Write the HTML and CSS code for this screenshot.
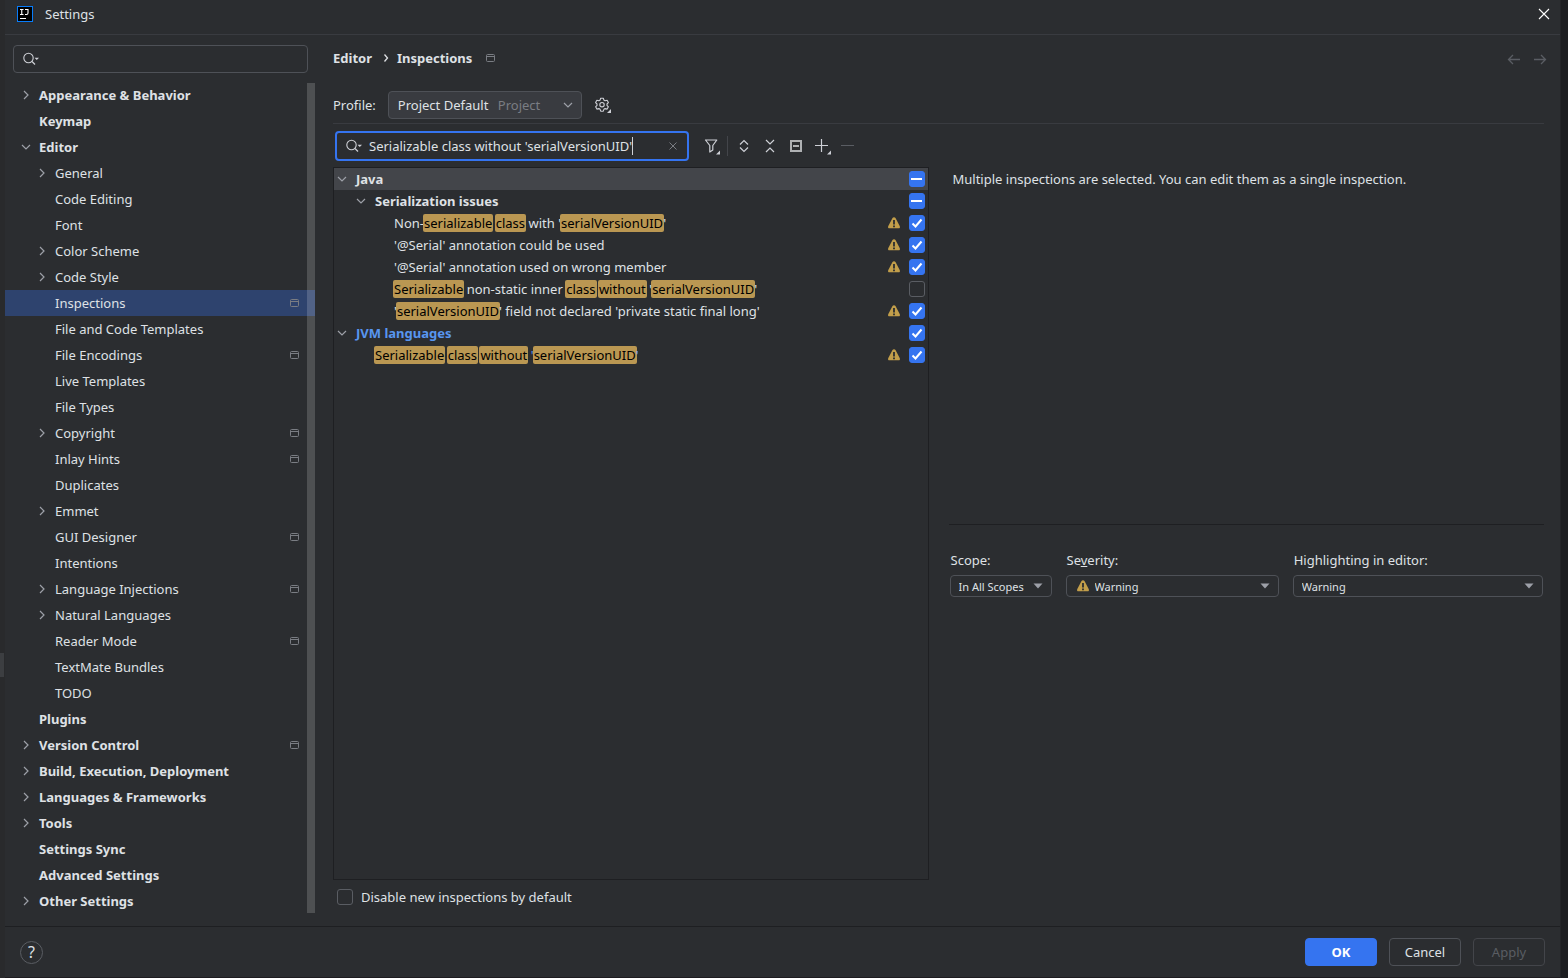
FILE: index.html
```html
<!DOCTYPE html>
<html lang="en">
<head>
  <meta charset="UTF-8">
  <meta name="viewport" content="width=device-width, initial-scale=1.0">
  <title>Settings</title>
  <link rel="stylesheet" href="styles.css">
</head>
<body>
  <!-- Icon sprite -->
  <svg class="sprite" aria-hidden="true">
    <symbol id="i-right" viewBox="0 0 16 16"><path d="M6 4l4 4-4 4" fill="none" stroke="currentColor" stroke-width="1.2"/></symbol>
    <symbol id="i-down" viewBox="0 0 16 16"><path d="M4 6l4 4 4-4" fill="none" stroke="currentColor" stroke-width="1.2"/></symbol>
    <symbol id="i-project" viewBox="0 0 16 16"><path d="M4.500 5.500a1 1 0 0 1 1-1h6a1 1 0 0 1 1 1v5a1 1 0 0 1-1 1h-6a1 1 0 0 1-1-1zM4.500 6.500h8" fill="none" stroke="currentColor"/></symbol>
    <symbol id="i-search" viewBox="0 0 20 16"><circle cx="6.500" cy="7" r="4.700" fill="none" stroke="currentColor" stroke-width="1.1"/><path d="M10 10.500l3 3" stroke="currentColor" stroke-width="1.2"/><path d="M12.500 6.800h4.500l-2.250 2.300z" fill="currentColor"/></symbol>
    <symbol id="i-warning" viewBox="0 0 16 16"><path d="M8 2.200q1 0 1.500.9l4.200 7.900q.9 2.300-1.200 2.300h-9q-2.100 0-1.200-2.300l4.200-7.900q.5-.9 1.500-.9z" fill="#c29e4a"/><path d="M7.100 5h1.800v4.500H7.100zM7.100 10.500h1.800v1.700H7.100z" fill="#2b2d30"/></symbol>
    <symbol id="i-triangle" viewBox="0 0 16 16"><path d="M3.500 5.500h9l-4.500 5z" fill="currentColor"/></symbol>
  </svg>

  <div class="edge edge-left"><span class="edge-grip"></span></div>

  <div class="window">
    <header class="titlebar">
      <svg class="logo" viewBox="0 0 16 16" aria-hidden="true">
        <rect width="16" height="16" fill="#087cfa"/>
        <rect x="1" y="1" width="14" height="14" fill="#000"/>
        <path d="M3 3.500h3.500M4.750 3.500v5M3 8.500h3.500M8 3.500h3v3.500q0 1.500-1.500 1.500H8M3 12.500h6" fill="none" stroke="#fff" stroke-width="1.100"/>
      </svg>
      <h1>Settings</h1>
      <button class="icon-btn close" aria-label="Close">
        <svg width="12" height="12" viewBox="0 0 12 12"><path d="M1 1l10 10M11 1L1 11" stroke="#fff" stroke-width="1.100"/></svg>
      </button>
    </header>

    <div class="body">
      <aside class="sidebar">
        <label class="search-box">
          <svg class="i-search"><use href="#i-search"/></svg>
          <input type="text" aria-label="Search settings">
        </label>

        <nav class="nav">
          <ul>
            <li class="top"><svg><use href="#i-right"/></svg><a href="#">Appearance &amp; Behavior</a></li>
            <li class="top leaf"><a href="#">Keymap</a></li>
            <li class="top"><svg><use href="#i-down"/></svg><a href="#">Editor</a></li>
            <li class="sub"><svg><use href="#i-right"/></svg><a href="#">General</a></li>
            <li class="sub leaf"><a href="#">Code Editing</a></li>
            <li class="sub leaf"><a href="#">Font</a></li>
            <li class="sub"><svg><use href="#i-right"/></svg><a href="#">Color Scheme</a></li>
            <li class="sub"><svg><use href="#i-right"/></svg><a href="#">Code Style</a></li>
            <li class="sub leaf active"><a href="#">Inspections</a><svg class="scope"><use href="#i-project"/></svg></li>
            <li class="sub leaf"><a href="#">File and Code Templates</a></li>
            <li class="sub leaf"><a href="#">File Encodings</a><svg class="scope"><use href="#i-project"/></svg></li>
            <li class="sub leaf"><a href="#">Live Templates</a></li>
            <li class="sub leaf"><a href="#">File Types</a></li>
            <li class="sub"><svg><use href="#i-right"/></svg><a href="#">Copyright</a><svg class="scope"><use href="#i-project"/></svg></li>
            <li class="sub leaf"><a href="#">Inlay Hints</a><svg class="scope"><use href="#i-project"/></svg></li>
            <li class="sub leaf"><a href="#">Duplicates</a></li>
            <li class="sub"><svg><use href="#i-right"/></svg><a href="#">Emmet</a></li>
            <li class="sub leaf"><a href="#">GUI Designer</a><svg class="scope"><use href="#i-project"/></svg></li>
            <li class="sub leaf"><a href="#">Intentions</a></li>
            <li class="sub"><svg><use href="#i-right"/></svg><a href="#">Language Injections</a><svg class="scope"><use href="#i-project"/></svg></li>
            <li class="sub"><svg><use href="#i-right"/></svg><a href="#">Natural Languages</a></li>
            <li class="sub leaf"><a href="#">Reader Mode</a><svg class="scope"><use href="#i-project"/></svg></li>
            <li class="sub leaf"><a href="#">TextMate Bundles</a></li>
            <li class="sub leaf"><a href="#">TODO</a></li>
            <li class="top leaf"><a href="#">Plugins</a></li>
            <li class="top"><svg><use href="#i-right"/></svg><a href="#">Version Control</a><svg class="scope"><use href="#i-project"/></svg></li>
            <li class="top"><svg><use href="#i-right"/></svg><a href="#">Build, Execution, Deployment</a></li>
            <li class="top"><svg><use href="#i-right"/></svg><a href="#">Languages &amp; Frameworks</a></li>
            <li class="top"><svg><use href="#i-right"/></svg><a href="#">Tools</a></li>
            <li class="top leaf"><a href="#">Settings Sync</a></li>
            <li class="top leaf"><a href="#">Advanced Settings</a></li>
            <li class="top"><svg><use href="#i-right"/></svg><a href="#">Other Settings</a></li>
          </ul>
          <span class="scrollbar"></span>
        </nav>
      </aside>

      <main class="content">
        <div class="crumbs">
          <a href="#">Editor</a>
          <svg class="crumb-sep" viewBox="0 0 6 10"><path d="M1.500 1.500L4.500 5l-3 3.500" fill="none" stroke="currentColor" stroke-width="1.300"/></svg>
          <h2>Inspections</h2>
          <svg class="scope"><use href="#i-project"/></svg>
          <div class="history">
            <button class="icon-btn" aria-label="Back" disabled><svg width="14" height="16" viewBox="0 0 14 16"><path d="M13 9.500H2M6 5L1.500 9.500 6 14" fill="none" stroke="currentColor" stroke-width="1.300"/></svg></button>
            <button class="icon-btn" aria-label="Forward" disabled><svg width="14" height="16" viewBox="0 0 14 16"><path d="M1 9.500h11M8 5l4.500 4.500L8 14" fill="none" stroke="currentColor" stroke-width="1.300"/></svg></button>
          </div>
        </div>

        <div class="profile">
          <label for="profile">Profile:</label>
          <div class="select select-profile">
            <select id="profile"><option>Project Default</option></select>
            <span class="hint">Project</span>
            <svg class="arrow"><use href="#i-down"/></svg>
          </div>
          <button class="icon-btn" aria-label="Profile actions">
            <svg width="20" height="20" viewBox="0 0 20 20">
              <path d="M7.700 3.200h2.600l.6 1.900 1.200.7 2-.5 1.300 2.300-1.400 1.400v1.400l1.400 1.400-1.300 2.300-2-.5-1.200.7-.6 1.900H7.700l-.6-1.900-1.200-.7-2 .5-1.300-2.300L4 10.400V9L2.600 7.600l1.300-2.300 2 .5 1.200-.7z" fill="none" stroke="currentColor" stroke-width="1.100" stroke-linejoin="round"/>
              <circle cx="9" cy="9.700" r="2.200" fill="none" stroke="currentColor" stroke-width="1.100"/>
              <path d="M18 14v4h-4z" fill="currentColor"/>
            </svg>
          </button>
        </div>

        <div class="panes">
          <section class="tree-pane">
            <div class="toolbar">
              <label class="search-box focused">
                <svg class="i-search"><use href="#i-search"/></svg>
                <input type="text" value="Serializable class without 'serialVersionUID'" aria-label="Search inspections">
                <span class="caret"></span>
                <button class="icon-btn clear" aria-label="Clear"><svg width="10" height="10" viewBox="0 0 10 10"><path d="M1.500 1.500l7 7M8.500 1.500l-7 7" stroke="currentColor"/></svg></button>
              </label>
              <button class="icon-btn tool filter" aria-label="Filter"><svg viewBox="0 0 20 20"><path d="M3.500 4h11.300l-4 5.500v4.500l-3 2V9.500z" fill="none" stroke="currentColor" stroke-width="1.200" stroke-linejoin="round"/><path d="M18 14.500v4h-4z" fill="currentColor"/></svg></button>
              <span class="tool-sep"></span>
              <button class="icon-btn tool" aria-label="Expand all"><svg viewBox="0 0 20 20"><path d="M6 8.500l4-4 4 4M6 11.500l4 4 4-4" fill="none" stroke="currentColor" stroke-width="1.200"/></svg></button>
              <button class="icon-btn tool" aria-label="Collapse all"><svg viewBox="0 0 20 20"><path d="M6 4l4 4 4-4M6 16l4-4 4 4" fill="none" stroke="currentColor" stroke-width="1.200"/></svg></button>
              <button class="icon-btn tool" aria-label="Reset to empty"><svg viewBox="0 0 20 20"><path d="M5 5h10v10H5z" fill="none" stroke="#afb1b3" stroke-width="2"/><path d="M7 10h6" stroke="#afb1b3" stroke-width="2"/></svg></button>
              <button class="icon-btn tool" aria-label="Add"><svg viewBox="0 0 20 20"><path d="M3 9.500h13M9.500 3v13" stroke="currentColor" stroke-width="1.200"/><path d="M19 14.500v4h-4z" fill="currentColor"/></svg></button>
              <button class="icon-btn tool" aria-label="Remove" disabled><svg viewBox="0 0 20 20"><path d="M3 9.500h13" stroke="currentColor"/></svg></button>
            </div>

            <ul class="tree">
              <li class="level-1 group selected"><svg><use href="#i-down"/></svg><label for="c1">Java</label><input type="checkbox" id="c1" class="partial"></li>
              <li class="level-2 group"><svg><use href="#i-down"/></svg><label for="c2">Serialization issues</label><input type="checkbox" id="c2" class="partial"></li>
              <li class="level-3"><label for="c3">Non-<mark>serializable</mark> <mark>class</mark> with '<mark>serialVersionUID</mark>'</label><svg><use href="#i-warning"/></svg><input type="checkbox" id="c3" checked></li>
              <li class="level-3"><label for="c4">'@Serial' annotation could be used</label><svg><use href="#i-warning"/></svg><input type="checkbox" id="c4" checked></li>
              <li class="level-3"><label for="c5">'@Serial' annotation used on wrong member</label><svg><use href="#i-warning"/></svg><input type="checkbox" id="c5" checked></li>
              <li class="level-3"><label for="c6"><mark>Serializable</mark> non-static inner <mark>class</mark> <mark>without</mark> '<mark>serialVersionUID</mark>'</label><input type="checkbox" id="c6"></li>
              <li class="level-3"><label for="c7">'<mark>serialVersionUID</mark>' field not declared 'private static final long'</label><svg><use href="#i-warning"/></svg><input type="checkbox" id="c7" checked></li>
              <li class="level-1 group changed"><svg><use href="#i-down"/></svg><label for="c8">JVM languages</label><input type="checkbox" id="c8" checked></li>
              <li class="level-2 changed"><label for="c9"><mark>Serializable</mark> <mark>class</mark> <mark>without</mark> '<mark>serialVersionUID</mark>'</label><svg><use href="#i-warning"/></svg><input type="checkbox" id="c9" checked></li>
            </ul>

            <div class="new-default">
              <input type="checkbox" id="disable-new">
              <label for="disable-new">Disable new inspections by default</label>
            </div>
          </section>

          <section class="details">
            <p class="description">Multiple inspections are selected. You can edit them as a single inspection.</p>
            <div class="options">
              <div class="field field-scope">
                <label for="scope">Scope:</label>
                <div class="select">
                  <select id="scope"><option>In All Scopes</option></select>
                  <svg class="arrow"><use href="#i-triangle"/></svg>
                </div>
              </div>
              <div class="field field-severity">
                <label for="severity">Se<u>v</u>erity:</label>
                <div class="select with-icon">
                  <select id="severity"><option>Warning</option></select>
                  <svg class="lead"><use href="#i-warning"/></svg>
                  <svg class="arrow"><use href="#i-triangle"/></svg>
                </div>
              </div>
              <div class="field field-highlight">
                <label for="highlighting">Highlighting in editor:</label>
                <div class="select">
                  <select id="highlighting"><option>Warning</option></select>
                  <svg class="arrow"><use href="#i-triangle"/></svg>
                </div>
              </div>
            </div>
          </section>
        </div>
      </main>
    </div>

    <footer class="footer">
      <button class="help" aria-label="Help">?</button>
      <div class="actions">
        <button class="btn primary">OK</button>
        <button class="btn">Cancel</button>
        <button class="btn" disabled>Apply</button>
      </div>
    </footer>
  </div>

  <div class="edge edge-right"></div>
</body>
</html>
```
FILE: styles.css
```css
* {
  box-sizing: border-box;
}

body {
  margin: 0;
  height: 100vh;
  display: flex;
  background: #2b2d30;
  color: #dfe1e5;
  font-family: "Noto Sans", "Open Sans", sans-serif;
  font-size: 13px;
  line-height: 20px;
  overflow: hidden;
}

.sprite {
  position: absolute;
  width: 0;
  height: 0;
}

ul {
  list-style: none;
  margin: 0;
  padding: 0;
}

a {
  color: inherit;
  text-decoration: none;
}

input,
select,
button {
  font: inherit;
  color: inherit;
}

/* Slivers of the windows behind the dialog */
.edge {
  flex: none;
  position: relative;
}
.edge-left {
  width: 5px;
  background: #292a2c;
}
.edge-right {
  width: 8px;
  background: #1c1d20;
  border-left: 1px solid #232427;
}
.edge-grip {
  position: absolute;
  top: 653px;
  left: 0;
  width: 4px;
  height: 24px;
  background: #3c3e41;
}

.window {
  flex: 1;
  min-width: 0;
  display: flex;
  flex-direction: column;
  border-bottom: 1px solid #1e1c20;
}

.titlebar {
  display: flex;
  align-items: center;
  height: 35px;
  padding: 0 10px 6px 12px;
  border-bottom: 1px solid #393b40;
}
.titlebar h1 {
  flex: 1;
  margin: 0 0 0 12px;
  font-size: 13px;
  font-weight: normal;
}
.logo {
  width: 16px;
  height: 16px;
}

.icon-btn {
  display: flex;
  align-items: center;
  justify-content: center;
  padding: 0;
  border: none;
  background: none;
  color: #ced0d6;
  cursor: pointer;
}
.icon-btn:disabled {
  color: #5a5d63;
  cursor: default;
}

.body {
  flex: 1;
  min-height: 0;
  display: flex;
}

/* Sidebar */
.sidebar {
  width: 310px;
  flex: none;
  padding-top: 10px;
}

.search-box {
  display: flex;
  align-items: center;
  height: 28px;
  padding: 0 8px;
  border: 1px solid #4e5157;
  border-radius: 4px;
  color: #ced0d6;
}
.search-box input {
  min-width: 0;
  padding: 0;
  border: none;
  outline: none;
  background: none;
  color: #dfe1e5;
}
.i-search {
  flex: none;
  width: 20px;
  height: 16px;
}
.sidebar .search-box {
  margin: 0 7px 9px 8px;
}

.nav {
  position: relative;
}
.nav li {
  display: flex;
  align-items: center;
  height: 26px;
}
.nav li svg {
  flex: none;
  width: 16px;
  height: 16px;
  color: #9da0a8;
}
.nav a {
  flex: 1;
}
.top {
  padding-left: 13px;
  font-weight: bold;
}
.sub {
  padding-left: 29px;
}
.top a,
.sub a {
  margin-left: 5px;
}
.top.leaf {
  padding-left: 29px;
}
.sub.leaf {
  padding-left: 45px;
}
.nav li .scope {
  margin-right: 13px;
}
.nav li .scope,
.crumbs .scope {
  color: #7a7d83;
}
.active {
  background: #2e436e;
}
.scrollbar {
  position: absolute;
  top: 1px;
  right: 0;
  bottom: 1px;
  width: 8px;
  background: rgba(255, 255, 255, 0.17);
}

/* Content */
.content {
  flex: 1;
  min-width: 0;
  display: flex;
  flex-direction: column;
  padding: 13px 16px 0 18px;
}

.crumbs {
  display: flex;
  align-items: center;
  font-weight: bold;
}
.crumbs h2 {
  margin: 0 10px 0 8px;
  font-size: 13px;
}
.crumb-sep {
  width: 6px;
  height: 10px;
  margin-left: 11px;
}
.crumbs .scope {
  width: 16px;
  height: 16px;
}
.history {
  display: flex;
  gap: 12px;
  margin-left: auto;
  margin-right: -3px;
}

.profile {
  display: flex;
  align-items: center;
  margin-top: 23px;
  padding-bottom: 4px;
  border-bottom: 1px solid #393b40;
}
.select-profile {
  width: 194px;
  margin: 0 11px 0 12px;
}

/* Drop-downs: the select fills the cell, the decorations lie over it */
.select {
  display: grid;
  align-items: center;
}
.select > * {
  grid-area: 1 / 1;
}
.select select {
  width: 100%;
  height: 22px;
  padding: 1px 8px 0;
  border: 1px solid #4e5157;
  border-radius: 4px;
  appearance: none;
  background: #2b2d30;
  font-size: 11px;
}
.select svg {
  width: 16px;
  height: 16px;
  pointer-events: none;
}
.select .arrow {
  justify-self: end;
  margin-right: 6px;
  color: #9da0a8;
}
.select .lead {
  margin-left: 9px;
}
.select.with-icon select {
  padding-left: 28px;
}
.select.select-profile select {
  height: 28px;
  padding: 0 9px;
  background: #393b40;
  font-size: 13px;
}
.hint {
  margin-left: 110px;
  color: #7a7d83;
  pointer-events: none;
}

.panes {
  flex: 1;
  min-height: 0;
  display: grid;
  grid-template-columns: 1fr 1fr;
  gap: 20px;
}

.tree-pane {
  display: flex;
  flex-direction: column;
  min-width: 0;
}

.toolbar {
  display: flex;
  align-items: center;
  gap: 6px;
  padding: 7px 2px 6px;
}
.focused {
  width: 354px;
  height: 30px;
  padding-right: 6px;
  border: 2px solid #3574f0;
}
.focused input {
  margin-left: 4px;
  field-sizing: content;
}
.caret {
  width: 1px;
  height: 18px;
  background: #ced0d6;
}
.clear {
  width: 16px;
  height: 16px;
  margin-left: auto;
  color: #7a7d83;
}
.tool {
  width: 20px;
  height: 20px;
}
.tool svg {
  width: 20px;
  height: 20px;
}
.filter {
  margin: 0 -1px 0 7px;
}
.tool-sep {
  width: 1px;
  height: 20px;
  background: #43454a;
}

.tree {
  flex: 1;
  border: 1px solid #1e1f22;
}
.tree li {
  display: flex;
  align-items: center;
  height: 22px;
  padding-right: 3px;
}
.tree label {
  flex: 1;
}
.tree svg {
  width: 16px;
  height: 16px;
  margin-right: 7px;
  color: #9da0a8;
}
.tree .group svg {
  margin-right: 6px;
}
.level-2 {
  padding-left: 41px;
}
.level-2.group {
  padding-left: 19px;
}
.level-3 {
  padding-left: 60px;
}
.group {
  font-weight: bold;
}
.changed {
  color: #5896f0;
}
.selected {
  background: #43454a;
}

mark {
  margin: 0 -1px;
  padding: 0 1px;
  border-radius: 2px;
  background: #ba9752;
  color: #000;
}

input[type="checkbox"] {
  flex: none;
  appearance: none;
  width: 16px;
  height: 16px;
  margin: 0;
  border: 1px solid #5a5d63;
  border-radius: 3px;
  background: center / 16px no-repeat;
}
input[type="checkbox"]:checked,
input[type="checkbox"].partial {
  border-color: #3574f0;
  background-color: #3574f0;
}
input[type="checkbox"]:checked {
  background-image: url("data:image/svg+xml,%3Csvg xmlns='http://www.w3.org/2000/svg' viewBox='0 0 16 16'%3E%3Cpath d='M3.500 8.500l3 3 6-7' fill='none' stroke='%23fff' stroke-width='2'/%3E%3C/svg%3E");
}
input[type="checkbox"].partial {
  background-image: linear-gradient(#fff, #fff);
  background-size: 11px 2px;
}

.new-default {
  display: flex;
  align-items: center;
  gap: 8px;
  padding: 7px 4px 19px;
}

/* Right pane */
.details {
  display: grid;
  grid-template-rows: 1fr 1fr;
  min-width: 0;
}
.description {
  margin: 0;
  padding: 45px 4px 0;
  border-bottom: 1px solid #1e1f22;
}
.options {
  display: flex;
  align-items: flex-start;
  gap: 14px;
  padding: 25px 1px 0;
}
.field label {
  display: block;
  padding-left: 1px;
  margin-bottom: 5px;
}
.field-scope {
  width: 102px;
}
.field-severity {
  flex: 213;
}
.field-highlight {
  flex: 250;
}

/* Footer */
.footer {
  display: flex;
  align-items: center;
  justify-content: space-between;
  height: 51px;
  padding: 0 15px;
  border-top: 1px solid #1e1f22;
}
.help {
  width: 23px;
  height: 23px;
  padding: 0;
  border: 1px solid #5a5d63;
  border-radius: 50%;
  background: none;
  font-size: 16px;
  line-height: 20px;
}
.actions {
  display: flex;
  gap: 12px;
}
.btn {
  width: 72px;
  height: 28px;
  padding: 0;
  border: 1px solid #4e5157;
  border-radius: 4px;
  background: none;
}
.btn.primary {
  border-color: #3574f0;
  background: #3574f0;
  color: #fff;
  font-weight: bold;
}
.btn:disabled {
  border-color: #43454a;
  color: #5a5d63;
}
```
